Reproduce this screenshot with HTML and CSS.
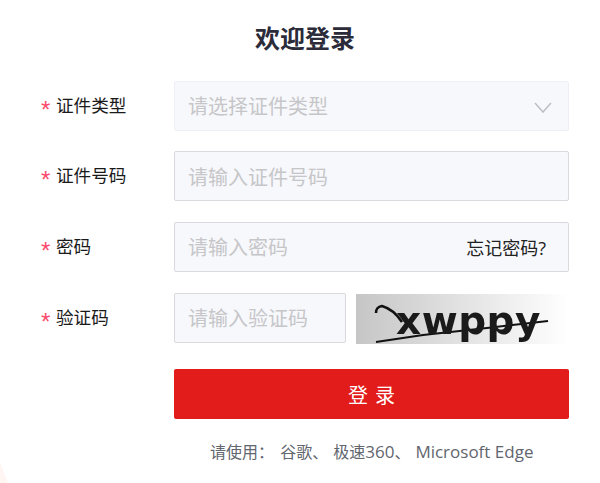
FILE: index.html
```html
<!DOCTYPE html>
<html lang="zh-CN">
<head>
<meta charset="utf-8">
<title>欢迎登录</title>
<link rel="stylesheet" href="styles.css">
</head>
<body>
<svg class="corner" width="12" height="21" viewBox="0 0 12 21"><polygon points="0,0 8,21 0,21" fill="#fff5f3"/></svg>
<main class="login">
  <h1 class="title">欢迎登录</h1>
  <form class="form">
    <div class="row">
      <label class="label"><span class="star">*</span>证件类型</label>
      <div class="field field-select">
        <span class="placeholder">请选择证件类型</span>
        <svg class="chevron" width="18" height="11" viewBox="0 0 18 11"><path d="M1 1 L9 10 L17 1" fill="none" stroke="#bcbec4" stroke-width="1.5"/></svg>
      </div>
    </div>
    <div class="row">
      <label class="label"><span class="star">*</span>证件号码</label>
      <div class="field"><span class="placeholder">请输入证件号码</span></div>
    </div>
    <div class="row">
      <label class="label"><span class="star">*</span>密码</label>
      <div class="field">
        <span class="placeholder">请输入密码</span>
        <a class="forgot">忘记密码?</a>
      </div>
    </div>
    <div class="row">
      <label class="label"><span class="star">*</span>验证码</label>
      <div class="field field-code"><span class="placeholder">请输入验证码</span></div>
      <div class="captcha">
        <svg class="captcha-lines" width="213" height="50" viewBox="0 0 213 50">
          <path d="M20 19 C20 15 21 13 26 12 C33 14 40 19 46 28" fill="none" stroke="#111" stroke-width="2.6"/>
          <path d="M20 48 L67 41 L131 34 L192 27" fill="none" stroke="#111" stroke-width="2"/>
        </svg>
        <span class="captcha-text">xwppy</span>
      </div>
    </div>
    <div class="row row-submit">
      <span class="label"></span>
      <button class="submit" type="button">登 录</button>
    </div>
    <p class="hint">请使用： <span class="browser browser-first">谷歌、</span><span class="browser">极速<span class="latin">360</span>、</span><span class="latin">Microsoft Edge</span></p>
  </form>
</main>
</body>
</html>
```
FILE: styles.css
```css
* { box-sizing: border-box; }
html, body { margin: 0; height: 100%; }
body {
  position: relative;
  width: 600px;
  height: 483px;
  overflow: hidden;
  background: #fff;
  font-family: "Open Sans", "Noto Sans CJK SC", sans-serif;
  color: #222;
}
.corner { position: absolute; left: 0; bottom: 0; display: block; }
.login { padding: 0 31px 0 41px; }
.title {
  margin: 0;
  height: 80.8px;
  padding-top: 20px;
  text-align: center;
  font-size: 25px;
  line-height: 36px;
  font-weight: 700;
  color: #2b2b3a;
  width: 528px;
}
.form { display: flex; flex-direction: column; gap: 20.6px; margin: 0; }
.row { display: flex; height: 50px; }
.label {
  display: flex;
  width: 133px;
  flex: none;
  font-size: 17.6px;
  line-height: 50px;
  margin-top: -1px;
  color: #1a1a1a;
  white-space: nowrap;
}
.star {
  flex: none;
  width: 15px;
  color: #fb4a6c;
  font-family: "Liberation Sans", sans-serif;
  font-size: 24px;
  line-height: 50px;
  position: relative;
  top: 5px;
}
.field {
  flex: 1;
  display: flex;
  align-items: center;
  justify-content: space-between;
  padding: 0 22px 0 13px;
  background: #f7f8fc;
  border: 1px solid #d9d9de;
  border-radius: 2px;
}
.field-select { border-color: #eef0f5; }
.field-code { flex: none; width: 172px; }
.placeholder { font-size: 20px; color: #c6c6c8; white-space: nowrap; }
.chevron { display: block; margin-top: 3px; margin-right: -6px; }
.forgot { font-size: 18px; color: #222; white-space: nowrap; }
.captcha {
  position: relative;
  flex: none;
  width: 213px;
  height: 50px;
  margin: 1px 0 0 10px;
  overflow: hidden;
  background: linear-gradient(90deg, #c6c6c6, #ffffff);
}
.captcha-lines { position: absolute; left: 0; top: 0; display: block; }
.captcha-text {
  position: absolute;
  left: 40px;
  top: 2px;
  font-family: "DejaVu Sans", sans-serif;
  font-size: 39px;
  line-height: 50px;
  font-weight: 700;
  letter-spacing: 0.5px;
  color: #1a1a1a;
  filter: blur(0.5px);
}
.submit {
  flex: 1;
  height: 50px;
  border: 0;
  border-radius: 2px;
  background: #e21b1b;
  color: #fff;
  font-family: inherit;
  font-size: 20px;
  word-spacing: 2px;
}
.row-submit { margin-top: 6px; }
.hint {
  margin: 0 0 0 169px;
  font-size: 16px;
  line-height: 24px;
  color: #62666e;
  white-space: nowrap;
}
.browser { margin-right: 5px; }
.browser-first { margin-left: 2px; }
.latin { font-size: 17px; }
```
